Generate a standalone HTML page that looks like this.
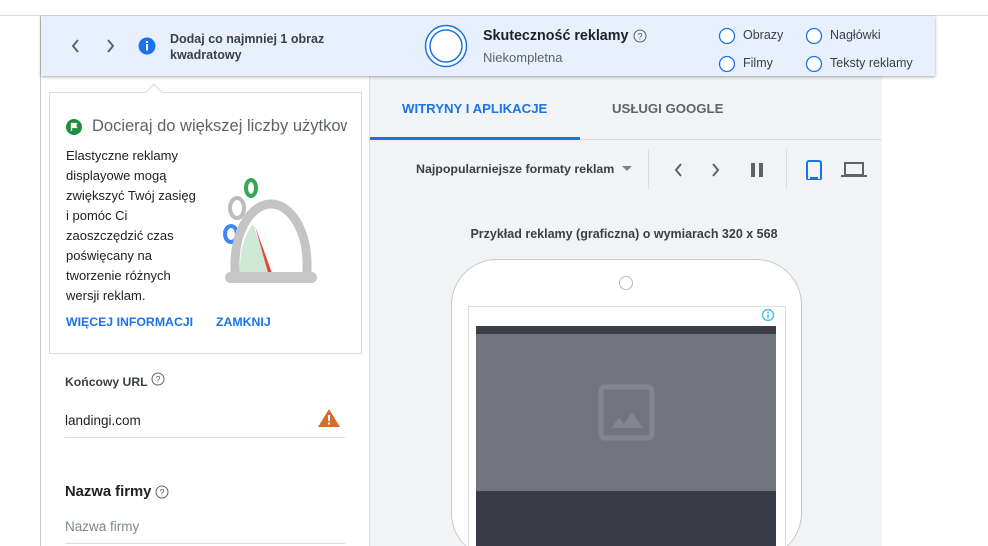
<!DOCTYPE html>
<html style="overflow:hidden;width:988px;height:546px"><head><meta charset="utf-8"><style>
*{margin:0;padding:0;box-sizing:border-box}
body{width:988px;height:546px;overflow:hidden;background:#fff;font-family:"Liberation Sans",sans-serif;position:relative;color:#3c4043}
.a{position:absolute;white-space:nowrap}
</style></head><body>
<div class="a" style="left:0;top:15px;width:988px;height:1px;background:#dadce0"></div>
<div class="a" style="left:40px;top:15px;width:1px;height:531px;background:#c8c8c8"></div>
<!-- right panel -->
<div class="a" style="left:370px;top:76px;width:512px;height:470px;background:#f1f3f4"></div>
<div class="a" style="left:369px;top:76px;width:1px;height:470px;background:#dadce0"></div>
<div class="a" style="left:370px;top:139px;width:512px;height:1px;background:#dadce0"></div>
<div class="a" style="left:370px;top:137px;width:210px;height:3px;background:#1a73e8"></div>
<div class="a" style="left:402px;top:101px;font-size:13.2px;font-weight:bold;color:#1a73e8">WITRYNY I APLIKACJE</div>
<div class="a" style="left:612px;top:101px;font-size:13.2px;font-weight:bold;color:#5f6368">USŁUGI GOOGLE</div>
<div class="a" style="left:416px;top:162px;font-size:12.4px;font-weight:bold;color:#3c4043">Najpopularniejsze formaty reklam</div>
<svg class="a" style="left:620px;top:164px" width="16" height="10"><path d="M2 2h10l-5 5z" fill="#80868b"/></svg>
<div class="a" style="left:648px;top:149px;width:1px;height:40px;background:#dadce0"></div>
<div class="a" style="left:786px;top:149px;width:1px;height:40px;background:#dadce0"></div>
<svg class="a" style="left:668px;top:160px" width="200" height="20">
<path d="M13 4l-5 6 5 6" stroke="#5f6368" stroke-width="2" fill="none"/>
<path d="M45 4l5 6-5 6" stroke="#5f6368" stroke-width="2" fill="none"/>
<rect x="83" y="3" width="4" height="14" fill="#5f6368"/><rect x="91" y="3" width="4" height="14" fill="#5f6368"/>
<rect x="139" y="1" width="14" height="19" rx="2" fill="none" stroke="#1a73e8" stroke-width="2"/><rect x="142" y="17" width="8" height="2" fill="#1a73e8"/>
<rect x="177" y="3" width="18" height="12" fill="none" stroke="#5f6368" stroke-width="2"/><rect x="173" y="15" width="26" height="2" fill="#5f6368"/>
</svg>
<div class="a" style="left:370px;width:508px;top:227px;text-align:center;font-size:12.5px;font-weight:bold;color:#3c4043">Przykład reklamy (graficzna) o wymiarach 320 x 568</div>
<div class="a" style="left:451px;top:259px;width:351px;height:300px;border:1.5px solid #c8c8c8;border-radius:46px;background:#fff"></div>
<div class="a" style="left:619px;top:276px;width:14px;height:14px;border:1px solid #bbb;border-radius:50%"></div>
<div class="a" style="left:468px;top:306px;width:318px;height:250px;border:1px solid #dadce0;background:#fff"></div>
<svg class="a" style="left:761px;top:308px" width="14" height="14"><circle cx="7" cy="7" r="5.5" fill="none" stroke="#4dc4e6" stroke-width="1.5"/><rect x="6.2" y="6" width="1.6" height="4.5" fill="#4dc4e6"/><rect x="6.2" y="3.5" width="1.6" height="1.6" fill="#4dc4e6"/></svg>
<div class="a" style="left:476px;top:326px;width:300px;height:8px;background:#3c3f47"></div>
<div class="a" style="left:476px;top:334px;width:300px;height:157px;background:#72757d"></div>
<div class="a" style="left:476px;top:491px;width:300px;height:55px;background:#383b46"></div>
<svg class="a" style="left:598px;top:384px" width="58" height="58"><rect x="3" y="3" width="51" height="51" rx="4" fill="none" stroke="#83868e" stroke-width="5"/><path d="M13 44l8-10 5 6 8-12 11 16z" fill="#83868e"/></svg>
<!-- left panel card -->
<div class="a" style="left:49px;top:92px;width:313px;height:262px;border:1px solid #dadce0;background:#fff"></div>
<div class="a" style="left:148px;top:86px;width:12px;height:12px;background:#fff;border-left:1px solid #dadce0;border-top:1px solid #dadce0;transform:rotate(45deg)"></div>
<svg class="a" style="left:66px;top:119px" width="16" height="16"><circle cx="8" cy="8" r="8" fill="#1e8e3e"/><path d="M5.5 4v8M5.5 4.5h5l-1 2 1 2h-5z" stroke="#fff" stroke-width="1.3" fill="#fff"/></svg>
<div class="a" style="left:92px;top:117px;font-size:16.5px;color:#5f6368;width:255px;overflow:hidden">Docieraj do większej liczby użytkowników</div>
<div class="a" style="left:66px;top:146px;font-size:13px;line-height:20px;color:#202124">Elastyczne reklamy<br>displayowe mogą<br>zwiększyć Twój zasięg<br>i pomóc Ci<br>zaoszczędzić czas<br>poświęcany na<br>tworzenie różnych<br>wersji reklam.</div>
<svg class="a" style="left:215px;top:172px" width="110" height="115">
<ellipse cx="16" cy="62" rx="6" ry="8" fill="none" stroke="#4285f4" stroke-width="4"/>
<ellipse cx="22" cy="36" rx="7" ry="10" fill="none" stroke="#bdbdbd" stroke-width="4"/>
<ellipse cx="36" cy="16" rx="5" ry="8" fill="none" stroke="#34a853" stroke-width="4"/>
<path d="M20 104 V92 A36 60 0 0 1 92 92 V104" fill="#fff" stroke="#c4c4c4" stroke-width="9"/>
<path d="M24 104 L26 80 Q30 62 38 52 L56 104z" fill="#cde9d6"/>
<path d="M40 54 L58 104 L54 104z" fill="#ea4335"/>
<rect x="10" y="100" width="92" height="11" rx="5" fill="#c8c8c8"/>
</svg>
<div class="a" style="left:66px;top:315px;font-size:12.3px;font-weight:bold;color:#1a73e8">WIĘCEJ INFORMACJI</div>
<div class="a" style="left:216px;top:315px;font-size:12.3px;font-weight:bold;color:#1a73e8">ZAMKNIJ</div>
<div class="a" style="left:65px;top:375px;font-size:12.2px;font-weight:bold;color:#3c4043">Końcowy URL</div>
<svg class="a" style="left:151px;top:372px" width="14" height="14"><circle cx="7" cy="7" r="6" fill="none" stroke="#5f6368" stroke-width="1"/><text x="7" y="10.5" font-size="9" text-anchor="middle" fill="#5f6368" font-family="Liberation Sans">?</text></svg>
<div class="a" style="left:65px;top:413px;font-size:13.5px;color:#202124">landingi.com</div>
<svg class="a" style="left:318px;top:408px" width="24" height="20"><path d="M11 1L22 19H0z" fill="#d56e2c"/><rect x="10" y="7" width="2" height="6" fill="#fff"/><rect x="10" y="14.5" width="2" height="2" fill="#fff"/></svg>
<div class="a" style="left:65px;top:437px;width:280px;height:1px;background:#dadce0"></div>
<div class="a" style="left:65px;top:484px;font-size:14.8px;font-weight:bold;color:#202124">Nazwa firmy</div>
<svg class="a" style="left:155px;top:485px" width="14" height="14"><circle cx="7" cy="7" r="6" fill="none" stroke="#5f6368" stroke-width="1"/><text x="7" y="10.5" font-size="9" text-anchor="middle" fill="#5f6368" font-family="Liberation Sans">?</text></svg>
<div class="a" style="left:65px;top:519px;font-size:13.5px;color:#80868b">Nazwa firmy</div>
<div class="a" style="left:65px;top:543px;width:280px;height:1px;background:#dadce0"></div>
<!-- banner -->
<div class="a" style="left:41px;top:16px;width:894px;height:60px;background:#e8f0fe;box-shadow:0 1px 3px rgba(0,0,0,.35)"></div>
<svg class="a" style="left:66px;top:36px" width="100" height="20">
<path d="M12 4l-5 6 5 6" stroke="#5f6368" stroke-width="2" fill="none"/>
<path d="M42 4l5 6-5 6" stroke="#5f6368" stroke-width="2" fill="none"/>
<circle cx="81" cy="10" r="8.5" fill="#1a73e8"/><rect x="80" y="8" width="2" height="6.5" fill="#fff"/><rect x="80" y="5" width="2" height="2" fill="#fff"/>
</svg>
<div class="a" style="left:170px;top:31px;font-size:12.5px;font-weight:bold;line-height:16px;color:#3c4043">Dodaj co najmniej 1 obraz<br>kwadratowy</div>
<svg class="a" style="left:424px;top:24px" width="44" height="44"><circle cx="22" cy="22" r="20.5" fill="#fff" stroke="#1a73e8" stroke-width="1.5"/><circle cx="22" cy="22" r="16" fill="none" stroke="#1a73e8" stroke-width="1.5"/></svg>
<div class="a" style="left:483px;top:28px;font-size:14.3px;font-weight:bold;color:#202124">Skuteczność reklamy</div>
<svg class="a" style="left:633px;top:29px" width="14" height="14"><circle cx="7" cy="7" r="6" fill="none" stroke="#5f6368" stroke-width="1"/><text x="7" y="10.5" font-size="9" text-anchor="middle" fill="#5f6368" font-family="Liberation Sans">?</text></svg>
<div class="a" style="left:483px;top:50px;font-size:13px;color:#5f6368">Niekompletna</div>
<svg class="a" style="left:718px;top:27px" width="110" height="46"><g fill="#fff" stroke="#1a73e8" stroke-width="1.3"><circle cx="9" cy="9" r="7.5"/><circle cx="9" cy="37" r="7.5"/><circle cx="96" cy="9" r="7.5"/><circle cx="96" cy="37" r="7.5"/></g></svg>
<div class="a" style="left:743px;top:28px;font-size:12.5px;color:#3c4043">Obrazy</div>
<div class="a" style="left:743px;top:56px;font-size:12.5px;color:#3c4043">Filmy</div>
<div class="a" style="left:830px;top:28px;font-size:12.5px;color:#3c4043">Nagłówki</div>
<div class="a" style="left:830px;top:56px;font-size:12.5px;color:#3c4043">Teksty reklamy</div>
</body></html>
